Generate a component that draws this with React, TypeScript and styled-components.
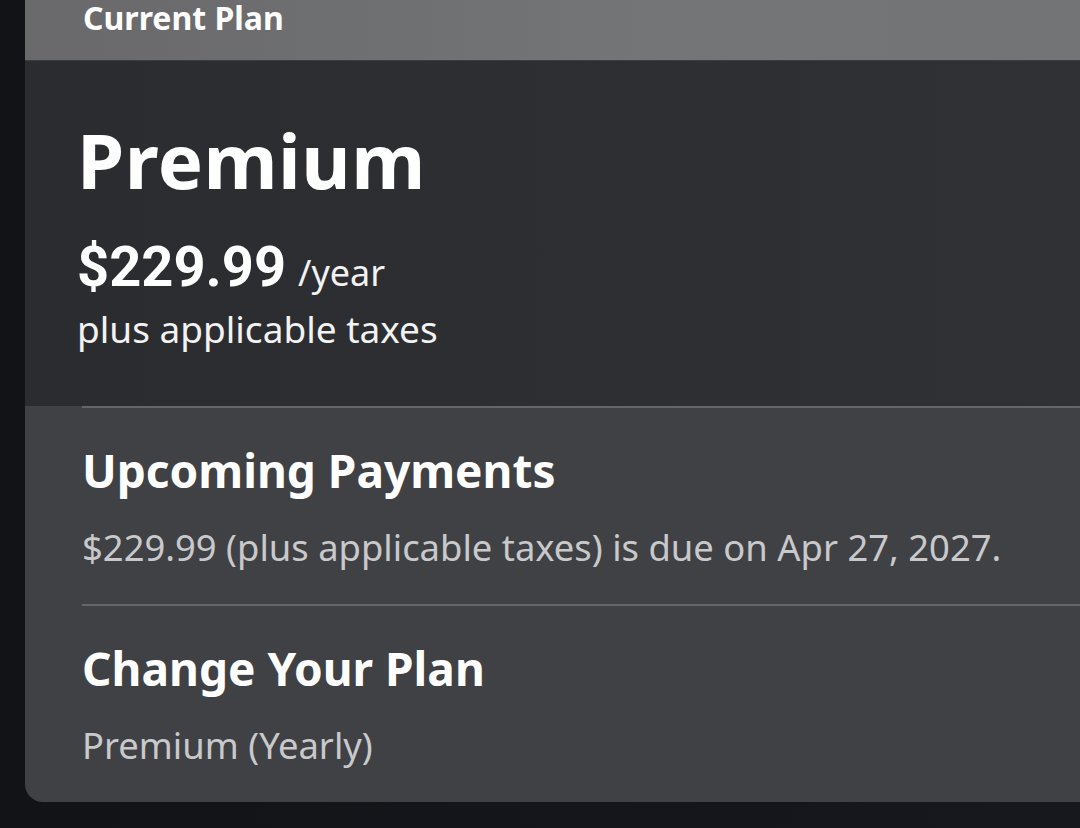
import React from 'react';
import styled, { createGlobalStyle } from 'styled-components';

const GlobalStyle = createGlobalStyle`
  html, body {
    margin: 0;
    padding: 0;
    background: #15161a;
    overflow: hidden;
  }
  body {
    font-family: "Noto Sans", "Open Sans", sans-serif;
    color: #ffffff;
  }
`;

const Page = styled.div`
  width: 1080px;
  height: 828px;
  padding-left: 25px;
  box-sizing: border-box;
  background: linear-gradient(90deg, #121317 0%, #17181d 100%);
`;

/* the card runs on past the right edge, so only its left corner is rounded */
const Card = styled.section`
  border-radius: 0 0 0 18px;
  overflow: hidden;
  background: #404145;
`;

const CardHeader = styled.header`
  height: 60px;
  padding-left: 58px;
  background: linear-gradient(90deg, #69696b 0%, #747577 60%, #737476 100%);
  border-bottom: 1px solid #3b3c3f;
`;

const HeaderTitle = styled.h2`
  margin: 0;
  font-size: 32px;
  line-height: 35px;
  font-weight: 700;
`;

const Summary = styled.div`
  padding: 54px 0 54px 52px;
  background: linear-gradient(90deg, #2b2c30 0%, #303135 100%);
`;

const PlanName = styled.h1`
  margin: 0;
  font-size: 76px;
  line-height: 90px;
  font-weight: 700;
  letter-spacing: 0.5px;
`;

const PriceRow = styled.div`
  margin-top: 31px;
  display: flex;
  align-items: baseline;
  gap: 12px;
`;

const Price = styled.span`
  font-family: Roboto, "Liberation Sans", sans-serif;
  font-size: 56px;
  line-height: 62px;
  font-weight: 700;
`;

const Period = styled.span`
  font-size: 36px;
  color: #f2f2f2;
`;

const TaxNote = styled.p`
  margin: 8px 0 0;
  font-size: 37px;
  line-height: 46px;
  font-weight: 400;
  color: #f2f2f2;
`;

const Details = styled.div`
  padding-left: 57px;
`;

const DetailBlock = styled.div`
  border-top: 2px solid #65666a;
  padding: 34px 0 34px;
`;

const DetailTitle = styled.h3`
  margin: 0;
  font-size: 46px;
  line-height: 56px;
  font-weight: 700;
`;

const DetailText = styled.p`
  margin: 26px 0 0;
  font-size: 36.4px;
  line-height: 46px;
  color: #c9c9cb;
`;

export default function App() {
  return (
    <>
      <GlobalStyle />
      <Page>
        <Card>
          <CardHeader>
            <HeaderTitle>Current Plan</HeaderTitle>
          </CardHeader>
          <Summary>
            <PlanName>Premium</PlanName>
            <PriceRow>
              <Price>$229.99</Price>
              <Period>/year</Period>
            </PriceRow>
            <TaxNote>plus applicable taxes</TaxNote>
          </Summary>
          <Details>
            <DetailBlock>
              <DetailTitle>Upcoming Payments</DetailTitle>
              <DetailText>$229.99 (plus applicable taxes) is due on Apr 27, 2027.</DetailText>
            </DetailBlock>
            <DetailBlock>
              <DetailTitle>Change Your Plan</DetailTitle>
              <DetailText>Premium (Yearly)</DetailText>
            </DetailBlock>
          </Details>
        </Card>
      </Page>
    </>
  );
}
